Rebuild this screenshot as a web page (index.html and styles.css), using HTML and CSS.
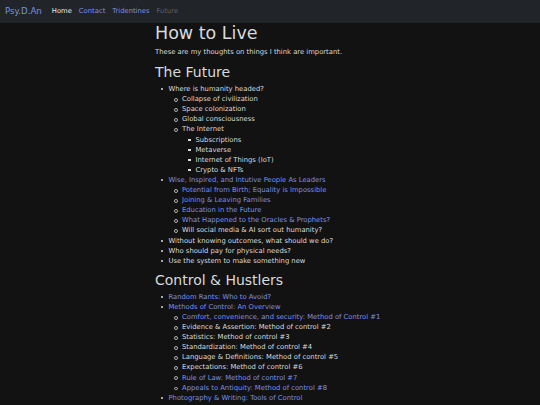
FILE: index.html
```html
<!DOCTYPE html>
<html lang="en">
<head>
<meta charset="utf-8">
<title>How to Live</title>
<link rel="stylesheet" href="styles.css">
</head>
<body>
<nav class="navbar">
  <a class="brand" href="#">Psy.D.An</a>
  <ul class="nav">
    <li><a class="nav-link active" href="#">Home</a></li>
    <li><a class="nav-link" href="#">Contact</a></li>
    <li><a class="nav-link" href="#">Tridentines</a></li>
    <li><a class="nav-link disabled" href="#">Future</a></li>
  </ul>
</nav>
<main class="content">
  <h1>How to Live</h1>
  <p>These are my thoughts on things I think are important.</p>
  <h2>The Future</h2>
  <ul class="list">
    <li>Where is humanity headed?
      <ul>
        <li>Collapse of civilization</li>
        <li>Space colonization</li>
        <li>Global consciousness</li>
        <li>The Internet
          <ul>
            <li>Subscriptions</li>
            <li>Metaverse</li>
            <li>Internet of Things (IoT)</li>
            <li>Crypto &amp; NFTs</li>
          </ul>
        </li>
      </ul>
    </li>
    <li><a href="#">Wise, Inspired, and Intutive People As Leaders</a>
      <ul>
        <li><a href="#">Potential from Birth; Equality is Impossible</a></li>
        <li><a href="#">Joining &amp; Leaving Families</a></li>
        <li><a href="#">Education in the Future</a></li>
        <li><a href="#">What Happened to the Oracles &amp; Prophets?</a></li>
        <li>Will social media &amp; AI sort out humanity?</li>
      </ul>
    </li>
    <li>Without knowing outcomes, what should we do?</li>
    <li>Who should pay for physical needs?</li>
    <li>Use the system to make something new</li>
  </ul>
  <h2>Control &amp; Hustlers</h2>
  <ul class="list">
    <li><a href="#">Random Rants: Who to Avoid?</a></li>
    <li><a href="#">Methods of Control: An Overview</a>
      <ul>
        <li><a href="#">Comfort, convenience, and security: Method of Control #1</a></li>
        <li>Evidence &amp; Assertion: Method of control #2</li>
        <li>Statistics: Method of control #3</li>
        <li>Standardization: Method of control #4</li>
        <li>Language &amp; Definitions: Method of control #5</li>
        <li>Expectations: Method of control #6</li>
        <li><a href="#">Rule of Law: Method of control #7</a></li>
        <li><a href="#">Appeals to Antiquity: Method of control #8</a></li>
      </ul>
    </li>
    <li><a href="#">Photography &amp; Writing: Tools of Control</a></li>
  </ul>
</main>
</body>
</html>
```

FILE: styles.css
```css
body {
  margin: 0;
  background: #121212;
  color: #d8dadd;
  font-family: "DejaVu Sans", sans-serif;
  font-size: 6.8px;
  line-height: 10.1px;
}
a { color: #7c90e6; text-decoration: none; }

.navbar {
  display: flex;
  align-items: center;
  height: 23px;
  padding: 0 5px;
  background: #212428;
}
.brand {
  font-size: 8.6px;
  margin-right: 6.5px;
  color: #7c90e6;
}
.nav {
  display: flex;
  list-style: none;
  margin: 0;
  padding: 0;
}
.nav-link {
  display: block;
  padding: 0 3.5px;
  font-size: 6.8px;
}
.nav-link.active { color: #e6e8ea; }
.nav-link.disabled { color: #5d6166; }

.content {
  width: 230px;
  margin: 0 auto;
  white-space: nowrap;
}
h1 {
  font-size: 17.5px;
  font-weight: 400;
  line-height: 21px;
  margin: 0 0 3px;
}
h2 {
  font-size: 14px;
  font-weight: 400;
  line-height: 17px;
  margin: 0 0 3px;
}
.content h2 + .list { margin-top: 0; }
p { margin: 0 0 7px; }
.list, .list ul {
  margin: 0;
  padding-left: 13.5px;
  list-style: none;
}
.list { margin-bottom: 6px; }
.list li { position: relative; }
.list li::before {
  content: "";
  position: absolute;
  left: -7.2px;
  top: 4.2px;
  width: 2.1px;
  height: 2.1px;
  border-radius: 50%;
  background: #d8dadd;
}
.list ul > li::before {
  left: -7.6px;
  top: 3.9px;
  width: 1.8px;
  height: 1.8px;
  background: transparent;
  border: 0.55px solid #b8bbbf;
}
.list ul ul > li::before {
  left: -7.2px;
  top: 4.1px;
  width: 2.2px;
  height: 2.2px;
  border: 0;
  border-radius: 0;
  background: #d8dadd;
}
```
